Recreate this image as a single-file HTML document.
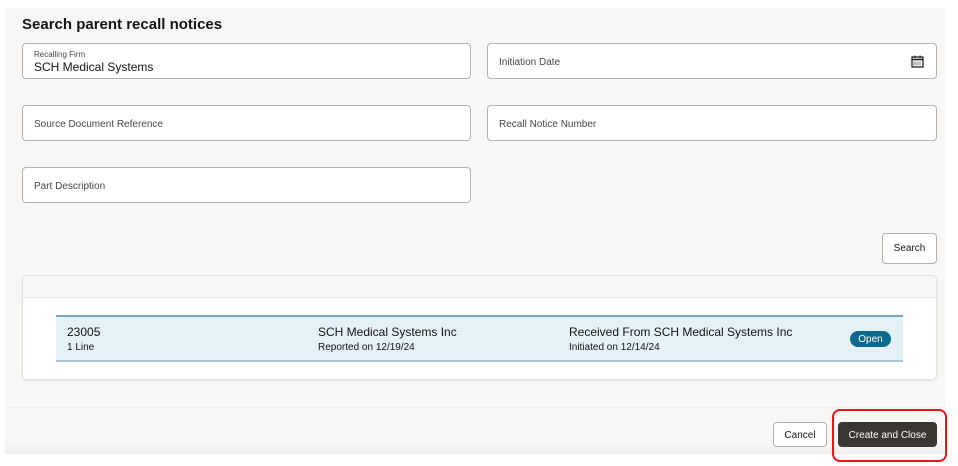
<!DOCTYPE html>
<html><head><style>
*{box-sizing:border-box;margin:0;padding:0}
body{width:958px;height:466px;background:#fff;font-family:"Liberation Sans",sans-serif;position:relative;overflow:hidden;color:#161513}
.panel{position:absolute;left:5px;top:8px;width:940px;height:446px;background:#f8f7f5}
.foot{position:absolute;left:5px;top:407px;width:940px;height:47px;background:linear-gradient(#f8f7f5 70%,#f0efed);border-top:1px solid #f1efec}
h1{position:absolute;left:22px;top:16px;font-size:15px;font-weight:bold}
.f{position:absolute;background:#fff;border:1px solid #b5b2ad;border-radius:4px;height:36px}
.f .p{position:absolute;left:11px;top:12px;font-size:10px;color:#4a4744;line-height:14px}
.f .l{position:absolute;left:11px;top:6px;font-size:8px;color:#4a4744}
.f .v{position:absolute;left:11px;top:16px;font-size:12px}
.btn{position:absolute;border:1px solid #b5b2ad;border-radius:4px;background:#fff;font-size:10px;text-align:center}
.card{position:absolute;left:22px;top:275px;width:915px;height:105px;background:#fff;border:1px solid #e4e1dd;border-radius:5px;box-shadow:0 1px 2px rgba(0,0,0,.08)}
.cardh{position:absolute;left:0;top:0;width:100%;height:22px;background:#f8f7f5;border-bottom:1px solid #eceae6;border-radius:5px 5px 0 0}
.row{position:absolute;left:56px;top:315px;width:847px;height:47px;background:#e4f1f7;border-top:2px solid #7ea7bd;border-bottom:2px solid #a9c6d6}
.t1{position:absolute;font-size:12px;top:8px}
.t2{position:absolute;font-size:10px;top:25px}
</style></head><body>
<div class="panel"></div>
<div class="foot"></div>
<h1>Search parent recall notices</h1>
<div class="f" style="left:22px;top:43px;width:449px"><div class="l">Recalling Firm</div><div class="v">SCH Medical Systems</div></div>
<div class="f" style="left:487px;top:43px;width:450px"><div class="p">Initiation Date</div>
<svg style="position:absolute;right:12px;top:11px" width="13" height="13" viewBox="0 0 13 13"><rect x="1" y="2" width="11" height="10" fill="none" stroke="#161513" stroke-width="1.2"/><line x1="1" y1="4.5" x2="12" y2="4.5" stroke="#161513" stroke-width="1.5"/><line x1="4" y1="0.5" x2="4" y2="3" stroke="#161513"/><line x1="9" y1="0.5" x2="9" y2="3" stroke="#161513"/><path d="M3 6.5v4M5 6.5v4M7 6.5v4M9 6.5v4" stroke="#666" stroke-width=".8"/></svg></div>
<div class="f" style="left:22px;top:105px;width:449px"><div class="p">Source Document Reference</div></div>
<div class="f" style="left:487px;top:105px;width:450px"><div class="p">Recall Notice Number</div></div>
<div class="f" style="left:22px;top:167px;width:449px"><div class="p">Part Description</div></div>
<div class="btn" style="left:882px;top:233px;width:55px;height:31px;line-height:29px">Search</div>
<div class="card"><div class="cardh"></div></div>
<div class="row">
<div class="t1" style="left:11px">23005</div><div class="t2" style="left:11px">1 Line</div>
<div class="t1" style="left:262px">SCH Medical Systems Inc</div><div class="t2" style="left:262px">Reported on 12/19/24</div>
<div class="t1" style="left:513px">Received From SCH Medical Systems Inc</div><div class="t2" style="left:513px">Initiated on 12/14/24</div>
<div style="position:absolute;left:794px;top:14px;width:41px;height:16px;border-radius:8px;background:#0e6a8a;color:#fff;font-size:10px;text-align:center;line-height:17px">Open</div>
</div>
<div class="btn" style="left:773px;top:422px;width:54px;height:25px;line-height:25px">Cancel</div>
<div class="btn" style="left:838px;top:422px;width:99px;height:25px;line-height:25px;background:#3a3632;border-color:#3a3632;color:#fff">Create and Close</div>
<div style="position:absolute;left:832px;top:409px;width:115px;height:53px;border:2px solid #e8151b;border-radius:8px"></div>
</body></html>
